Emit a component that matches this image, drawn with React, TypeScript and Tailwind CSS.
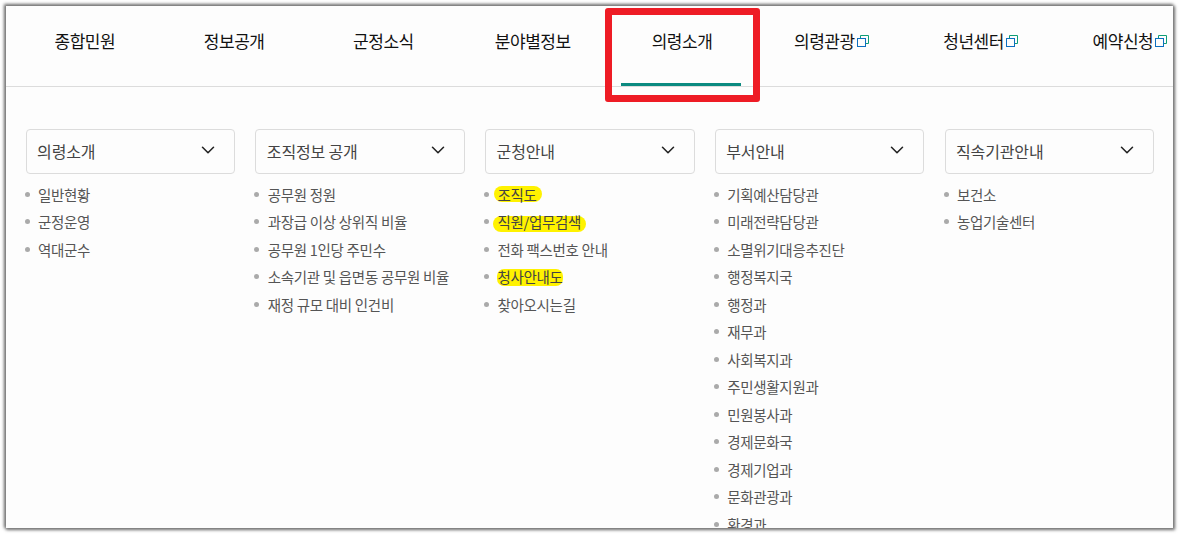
import { ChevronDown } from "lucide-react"

const navItems = [
  { label: "종합민원" },
  { label: "정보공개" },
  { label: "군정소식" },
  { label: "분야별정보" },
  { label: "의령소개", active: true },
  { label: "의령관광", external: true },
  { label: "청년센터", external: true },
  { label: "예약신청", external: true },
]

// hand-drawn highlighter marks on three of the links
const marks: Record<string, string> = {
  "조직도": "-left-[3px] -right-[5px] top-[2px] h-[16px] rounded-full",
  "직원/업무검색": "-left-[4px] -right-[5px] top-[5px] h-[16px] rounded-full",
  "청사안내도": "left-0 right-0 top-[3px] h-[17px] rounded-[7px]",
}

const columns = [
  { title: "의령소개", links: ["일반현황", "군정운영", "역대군수"] },
  {
    title: "조직정보 공개",
    links: ["공무원 정원", "과장급 이상 상위직 비율", "공무원 1인당 주민수", "소속기관 및 읍면동 공무원 비율", "재정 규모 대비 인건비"],
  },
  {
    title: "군청안내",
    links: ["조직도", "직원/업무검색", "전화 팩스번호 안내", "청사안내도", "찾아오시는길"],
  },
  {
    title: "부서안내",
    links: [
      "기획예산담당관",
      "미래전략담당관",
      "소멸위기대응추진단",
      "행정복지국",
      "행정과",
      "재무과",
      "사회복지과",
      "주민생활지원과",
      "민원봉사과",
      "경제문화국",
      "경제기업과",
      "문화관광과",
      "환경과",
    ],
  },
  { title: "직속기관안내", links: ["보건소", "농업기술센터"] },
]

function ExternalIcon() {
  return (
    <svg width="12" height="12" viewBox="0 0 12 12" fill="none" className="shrink-0">
      <path d="M3.5 3V0.5H11.5V8.5H9" stroke="#0f9d76" strokeWidth="1" />
      <rect x="0.5" y="3.5" width="8" height="8" stroke="#0b6fc0" strokeWidth="1" />
    </svg>
  )
}

export default function App() {
  return (
    <div className="h-[534px] w-[1179px] overflow-hidden bg-white font-['Noto_Sans_CJK_KR','Noto_Sans',sans-serif] pl-[6px] pt-[6px]">
      <div className="relative h-[522px] w-[1167px] overflow-hidden bg-[#fdfdfd] shadow-[-1px_-1px_3px_1px_#777,1px_1px_3px_1px_#777]">
        <nav className="flex h-[81px] border-b border-[#dcdcdc] pl-[4.2px]">
          {navItems.map((item) => (
            <div
              key={item.label}
              className="relative flex h-[80px] w-[149.3px] shrink-0 items-start justify-center pt-[22px] text-[17px] leading-[26px] tracking-[-0.45px] text-[#111]"
            >
              <span>{item.label}</span>
              {item.external && (
                <span className="ml-[2px] mt-[7px]">
                  <ExternalIcon />
                </span>
              )}
              {item.active && <span className="absolute bottom-0 left-[13.4px] h-[3px] w-[120px] bg-[#0b8a80]" />}
            </div>
          ))}
        </nav>

        <div className="flex gap-[20.15px] pl-[19.6px] pt-[42px]">
          {columns.map((col) => (
            <div key={col.title} className="w-[209.6px] shrink-0">
              <div className="flex h-[45px] items-center justify-between rounded-[4px] border border-[#dcdcdc] pl-[10.5px] pr-[15px] text-[16px] tracking-[-0.15px] text-[#444]">
                <span className="-mt-[2px]">{col.title}</span>
                <ChevronDown size={22} strokeWidth={1.7} className="-mt-[3px] text-[#222]" />
              </div>
              <ul className="mt-[6.7px]">
                {col.links.map((link) => (
                  <li key={link} className="flex h-[27.5px] items-center text-[14.5px] tracking-[-0.3px] text-[#555]">
                    <span className="-ml-[1px] mr-[8.4px] h-[5px] w-[5px] shrink-0 rounded-full bg-[#aaa]" />
                    {marks[link] ? (
                      <span className="relative leading-[21px] text-[#444]">
                        <span className={`absolute bg-[#fff200] ${marks[link]}`} />
                        <span className="relative">{link}</span>
                      </span>
                    ) : (
                      <span>{link}</span>
                    )}
                  </li>
                ))}
              </ul>
            </div>
          ))}
        </div>

        <div className="absolute left-[599px] top-[2px] h-[94px] w-[155px] rounded-[3px] border-[7px] border-[#ee1c25]" />
      </div>
    </div>
  )
}
